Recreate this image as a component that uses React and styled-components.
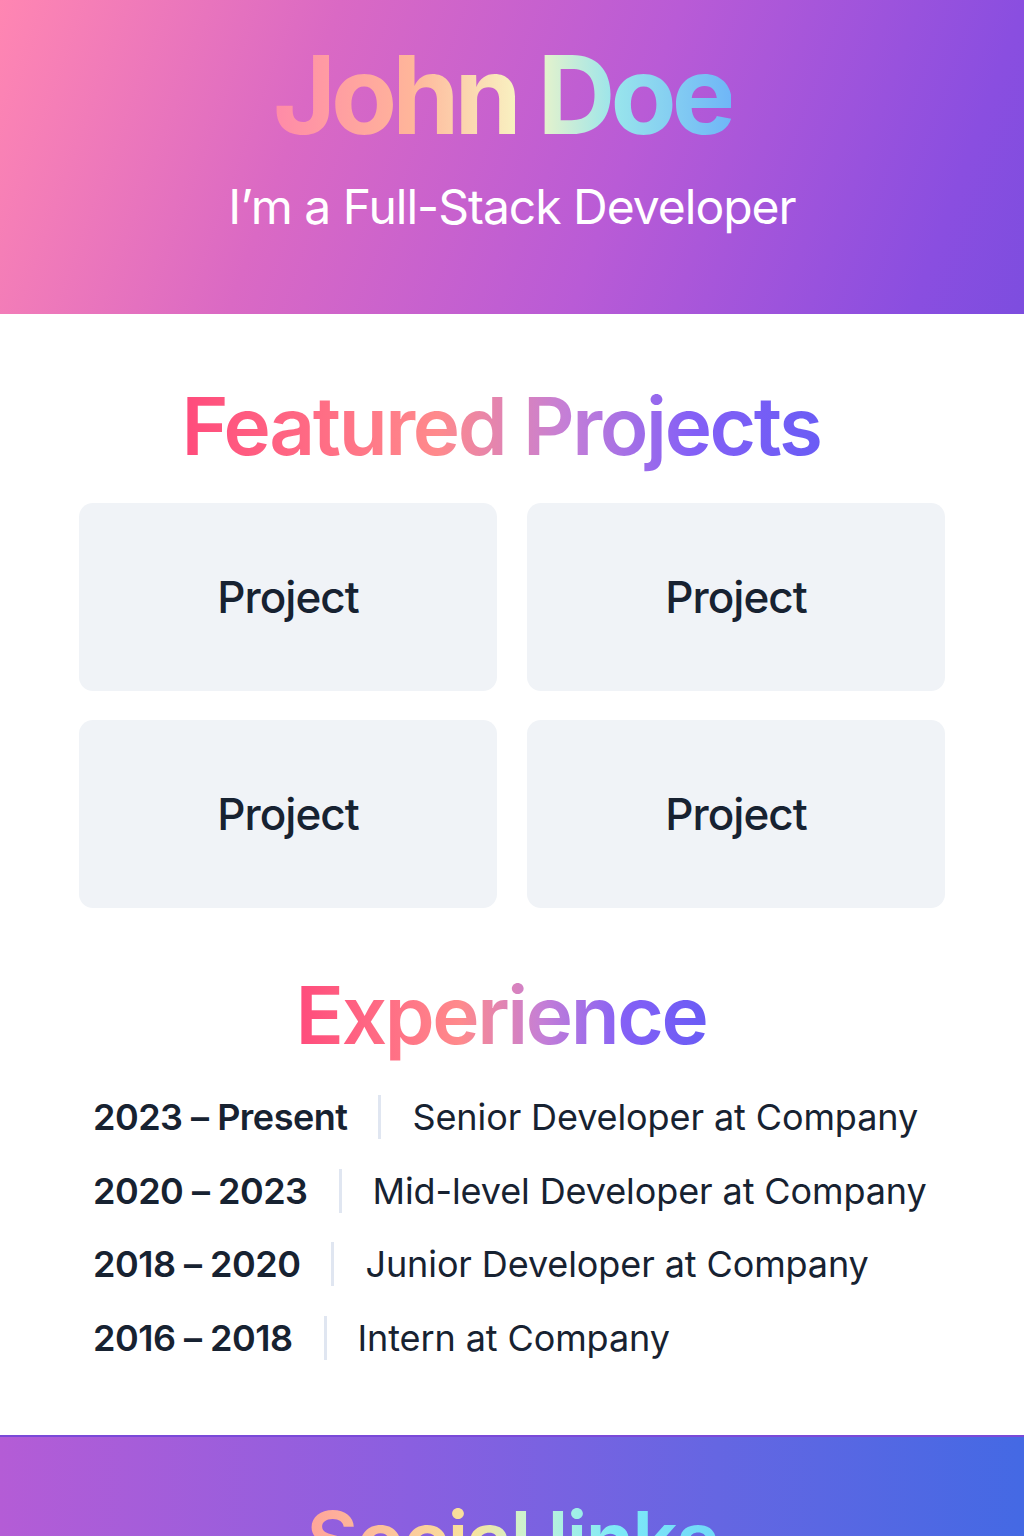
import React from 'react'
import styled, { createGlobalStyle } from 'styled-components'

const Global = createGlobalStyle`
  body {
    margin: 0;
    background: #ffffff;
    font-family: Inter, "Noto Sans", sans-serif;
    -webkit-font-smoothing: antialiased;
  }
`

const Header = styled.header`
  height: 314px;
  box-sizing: border-box;
  padding-top: 36px;
  background: linear-gradient(110deg, #ff86b2 0%, #da69c4 30%, #b95bd6 60%, #8a4ee0 90%, #7d4ddf 100%);
  text-align: center;
`

const Name = styled.h1`
  margin: 0 20px 0 0;
  font-size: 108px;
  font-weight: 700;
  letter-spacing: -5px;
  line-height: 1.1;
  background: linear-gradient(90deg, #ff8aa8 0%, #ffb59a 30%, #f8f6c4 55%, #98e4ec 75%, #6fb6f7 100%);
  -webkit-background-clip: text;
  background-clip: text;
  color: transparent;
  display: inline-block;
`

const Tagline = styled.p`
  margin: 22px 0 0;
  font-size: 48px;
  font-weight: 400;
  letter-spacing: -1px;
  color: #ffffff;
`

const Main = styled.main`
  width: 866px;
  margin: 0 auto;
  padding: 68px 0 75px;
`

const SectionTitle = styled.h2`
  margin: 0 0 ${(p) => p.$gap}px;
  padding-right: 22px;
  text-align: center;
  font-size: 80px;
  font-weight: 600;
  letter-spacing: -2.4px;
  line-height: 1.1;
  & span {
    background: linear-gradient(90deg, #ff4b7c 0%, #ff8a8c 40%, #c57fd6 60%, #8460f6 80%, #6a5cf5 100%);
    -webkit-background-clip: text;
    background-clip: text;
    color: transparent;
  }
`

const Grid = styled.div`
  display: grid;
  grid-template-columns: 1fr 1fr;
  column-gap: 30px;
  row-gap: 29px;
  margin-bottom: 63px;
`

const Card = styled.div`
  height: 188px;
  border-radius: 14px;
  background: #f0f3f7;
  display: flex;
  align-items: center;
  justify-content: center;
  font-size: 44px;
  font-weight: 500;
  letter-spacing: -1px;
  color: #172231;
`

const Timeline = styled.ul`
  list-style: none;
  margin: 0;
  padding: 0 0 0 14px;
  display: flex;
  flex-direction: column;
  gap: 29.5px;
`

const Entry = styled.li`
  display: flex;
  align-items: center;
  gap: 31px;
  height: 44px;
  font-size: 36px;
  color: #172231;
`

const Years = styled.span`
  font-weight: 600;
  letter-spacing: -0.5px;
`

const Divider = styled.span`
  width: 3px;
  height: 44px;
  background: #e0e6f1;
`

const Role = styled.span`
  font-weight: 400;
  letter-spacing: -0.1px;
`

const Footer = styled.footer`
  height: 240px;
  padding-top: 59px;
  box-sizing: border-box;
  text-align: center;
  border-top: 2px solid #7a49d8;
  background: linear-gradient(90deg, #b45cd6 0%, #8a5fe0 40%, #6566e2 70%, #4469e4 100%);
`

const FooterTitle = styled.h2`
  margin: 0;
  display: inline-block;
  font-size: 80px;
  font-weight: 600;
  letter-spacing: -2px;
  line-height: 1.1;
  background: linear-gradient(90deg, #ffa39a 0%, #f9e39c 40%, #c6f3d6 55%, #7eeaf7 75%, #70d8f8 100%);
  -webkit-background-clip: text;
  background-clip: text;
  color: transparent;
`

const projects = ['Project', 'Project', 'Project', 'Project']

const jobs = [
  { years: '2023 – Present', role: 'Senior Developer at Company' },
  { years: '2020 – 2023', role: 'Mid-level Developer at Company' },
  { years: '2018 – 2020', role: 'Junior Developer at Company' },
  { years: '2016 – 2018', role: 'Intern at Company' },
]

function App() {
  return (
    <>
      <Global />
      <Header>
        <Name>John Doe</Name>
        <Tagline>I’m a Full-Stack Developer</Tagline>
      </Header>
      <Main>
        <SectionTitle $gap={33}><span>Featured Projects</span></SectionTitle>
        <Grid>
          {projects.map((p, i) => (
            <Card key={i}>{p}</Card>
          ))}
        </Grid>
        <SectionTitle $gap={36}><span>Experience</span></SectionTitle>
        <Timeline>
          {jobs.map((j) => (
            <Entry key={j.years}>
              <Years>{j.years}</Years>
              <Divider />
              <Role>{j.role}</Role>
            </Entry>
          ))}
        </Timeline>
      </Main>
      <Footer>
        <FooterTitle>Social links</FooterTitle>
      </Footer>
    </>
  )
}

export default App
